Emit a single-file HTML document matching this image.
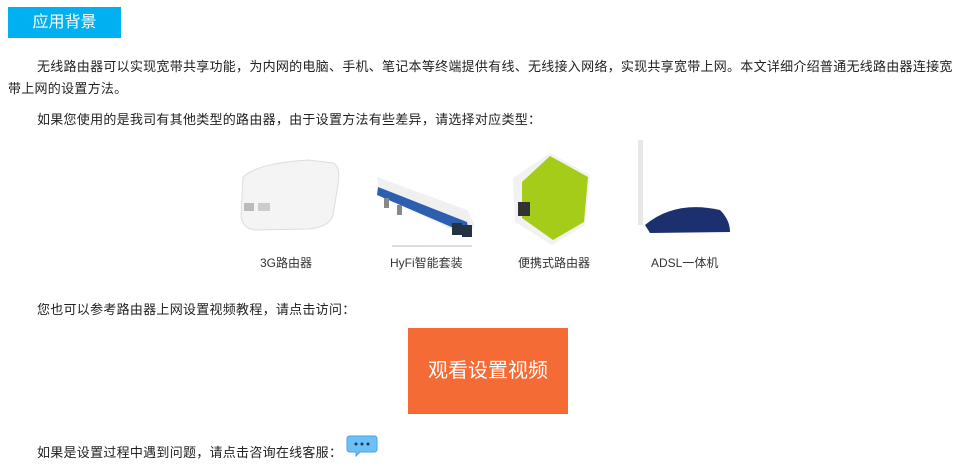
<!DOCTYPE html>
<html><head><meta charset="utf-8"><style>
body{margin:0;width:962px;height:470px;background:#fff;font-family:"Liberation Sans","Noto Sans CJK SC",sans-serif;color:#222;position:relative;overflow:hidden}
.a{position:absolute}
.t{font-size:13px;white-space:nowrap;letter-spacing:0.27px}
.lbl{font-size:12px;color:#333;white-space:nowrap}
</style></head><body>
<div class="a" style="left:8px;top:7px;width:113px;height:31px;background:#00b0f0;color:#fff;font-size:16px;line-height:31px;text-align:center;letter-spacing:0px">应用背景</div>
<div class="a t" style="left:37px;top:56px">无线路由器可以实现宽带共享功能，为内网的电脑、手机、笔记本等终端提供有线、无线接入网络，实现共享宽带上网。本文详细介绍普通无线路由器连接宽</div>
<div class="a t" style="left:8px;top:78px">带上网的设置方法。</div>
<div class="a t" style="left:37px;top:109px">如果您使用的是我司有其他类型的路由器，由于设置方法有些差异，请选择对应类型：</div>

<svg class="a" style="left:238px;top:155px" width="110" height="80"><path d="M5 22 Q20 8 70 5 L95 8 Q103 12 100 30 L95 60 Q92 72 70 74 L18 75 Q5 74 3 62 Z" fill="#f4f4f4" stroke="#ddd"/><rect x="6" y="48" width="10" height="8" fill="#bbb"/><rect x="20" y="48" width="12" height="8" fill="#ccc"/></svg>
<svg class="a" style="left:372px;top:165px" width="110" height="85"><path d="M5 12 L95 45 L103 60 L95 72 L8 30 Z" fill="#f0f0f0"/><path d="M6 22 L95 57 L98 70 L5 30 Z" fill="#2d5fb0"/><rect x="80" y="58" width="10" height="12" fill="#234" /><rect x="90" y="60" width="10" height="12" fill="#234"/><rect x="12" y="33" width="5" height="10" fill="#888"/><rect x="25" y="40" width="5" height="10" fill="#888"/><rect x="20" y="80" width="80" height="2" fill="#ddd"/></svg>
<svg class="a" style="left:510px;top:150px" width="85" height="95"><path d="M40 3 L80 25 L75 75 L42 95 L5 72 L3 28 Z" fill="#f2f2f2"/><path d="M40 6 L78 27 L74 72 L43 90 L12 68 L12 32 Z" fill="#a6cc1a"/><rect x="8" y="52" width="12" height="14" fill="#333"/></svg>
<svg class="a" style="left:635px;top:140px" width="100" height="105"><rect x="3" y="0" width="5" height="85" fill="#e8e8e8"/><path d="M10 85 Q40 60 85 70 Q95 80 95 92 L15 93 Z" fill="#1c2f6e"/></svg>

<div class="a lbl" style="left:260px;top:254px">3G路由器</div>
<div class="a lbl" style="left:390px;top:254px">HyFi智能套装</div>
<div class="a lbl" style="left:518px;top:254px">便携式路由器</div>
<div class="a lbl" style="left:651px;top:254px">ADSL一体机</div>

<div class="a t" style="left:37px;top:299px">您也可以参考路由器上网设置视频教程，请点击访问：</div>
<div class="a" style="left:408px;top:328px;width:160px;height:86px;background:#f56b35;color:#fff;font-size:20px;line-height:86px;text-align:center">观看设置视频</div>

<div class="a t" style="left:37px;top:442px">如果是设置过程中遇到问题，请点击咨询在线客服：</div>
<svg class="a" style="left:346px;top:434px" width="34" height="24"><path d="M4 2 H28 Q31 2 31 5 V15 Q31 18 28 18 H14 L10 22 L10 18 H4 Q1 18 1 15 V5 Q1 2 4 2 Z" fill="#6cc0f5" stroke="#4aa3e0"/><circle cx="10" cy="10" r="1.5" fill="#235"/><circle cx="16" cy="10" r="1.5" fill="#235"/><circle cx="22" cy="10" r="1.5" fill="#235"/></svg>
</body></html>
